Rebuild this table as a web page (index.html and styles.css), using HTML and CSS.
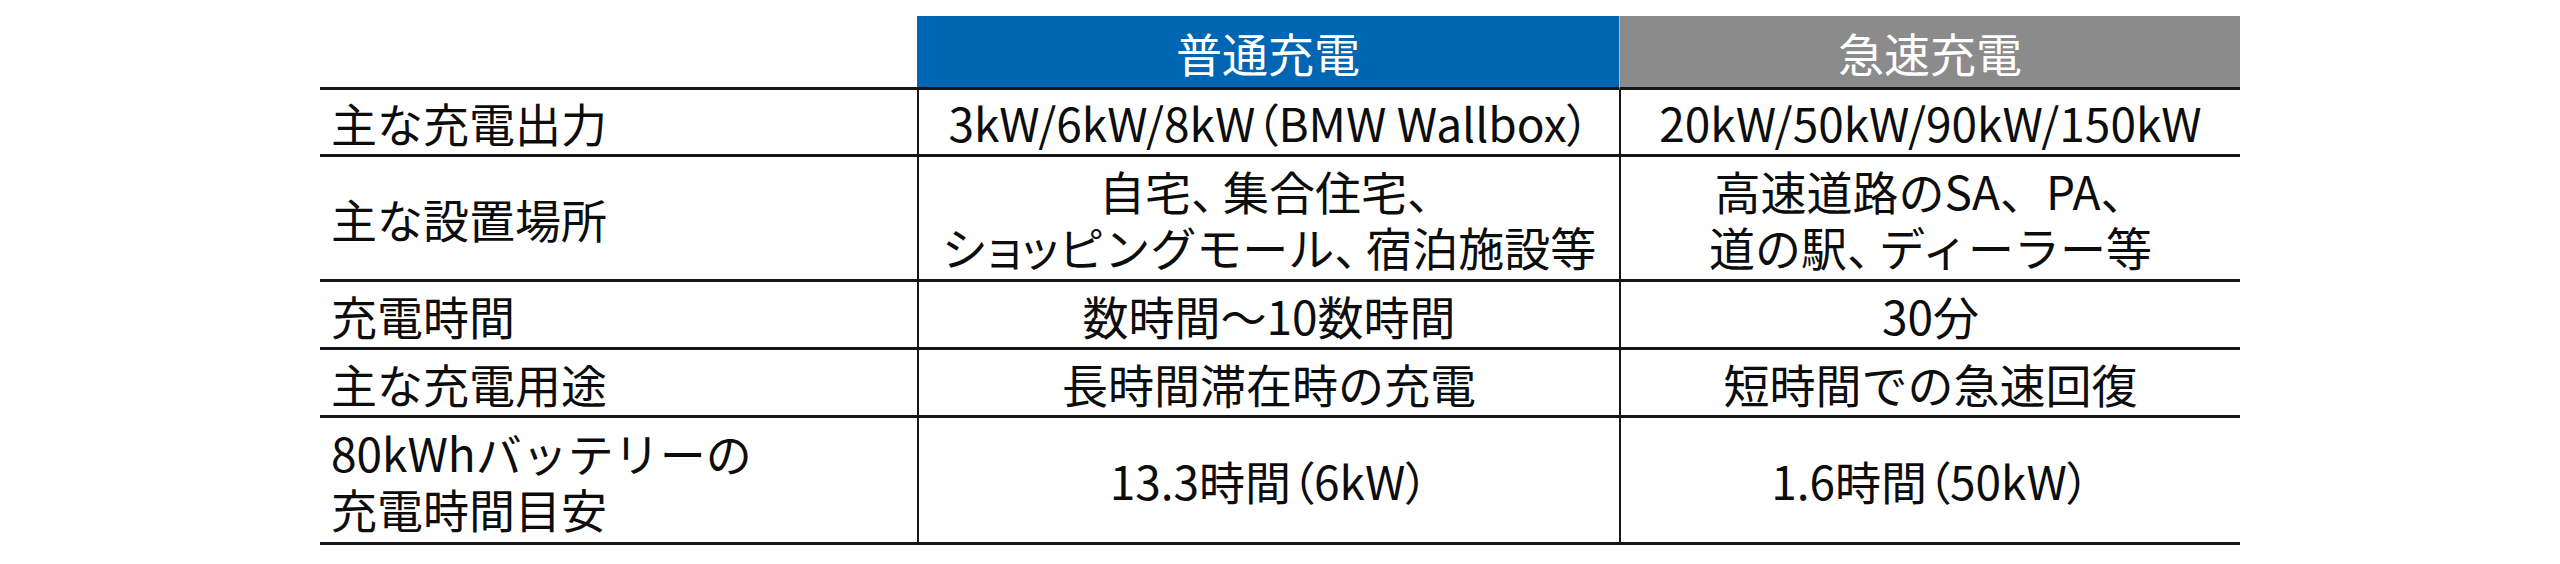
FILE: index.html
```html
<!DOCTYPE html>
<html lang="ja">
<head>
<meta charset="utf-8">
<title>普通充電と急速充電</title>
<link rel="stylesheet" href="styles.css">
</head>
<body>
<div class="table">
  <div class="cell corner"></div>
  <div class="cell head normal"><span class="txt">普通充電</span></div>
  <div class="cell head fast"><span class="txt">急速充電</span></div>

  <div class="cell label"><span class="txt">主な充電出力</span></div>
  <div class="cell val"><span class="txt">3kW/6kW/8kW<span class="pr">（</span>BMW Wallbox<span class="pr">）</span></span></div>
  <div class="cell val"><span class="txt">20kW/50kW/90kW/150kW</span></div>

  <div class="cell label"><span class="txt">主な設置場所</span></div>
  <div class="cell val"><span class="txt">自宅<span class="cm">、</span>集合住宅<span class="cm">、</span><br>シ<span class="pr">ョッ</span>ピングモール<span class="cm">、</span>宿泊施設等</span></div>
  <div class="cell val"><span class="txt">高速道路のSA、PA、<br>道の駅<span class="cm">、</span>ディーラー等</span></div>

  <div class="cell label"><span class="txt">充電時間</span></div>
  <div class="cell val"><span class="txt">数時間～10数時間</span></div>
  <div class="cell val"><span class="txt">30分</span></div>

  <div class="cell label"><span class="txt">主な充電用途</span></div>
  <div class="cell val"><span class="txt">長時間滞在時の充電</span></div>
  <div class="cell val"><span class="txt">短時間での急速回復</span></div>

  <div class="cell label"><span class="txt">80kWhバッテリーの<br>充電時間目安</span></div>
  <div class="cell val"><span class="txt">13.3時間<span class="pr">（</span>6kW<span class="pr">）</span></span></div>
  <div class="cell val"><span class="txt">1.6時間<span class="pr">（</span>50kW<span class="pr">）</span></span></div>
</div>
</body>
</html>
```

FILE: styles.css
```css
html, body {
  margin: 0;
  padding: 0;
  background: #ffffff;
}

body {
  font-family: "Noto Sans CJK JP", "Noto Sans", sans-serif;
  font-size: 46px;
  font-weight: 400;
  color: #0d0d0d;
  padding-top: 16px;
}

.table {
  width: 1920px;
  margin: 0 auto;
  display: grid;
  grid-template-columns: 597px 702px 621px;
  grid-template-rows: 74px 67px 125px 68px 68px 127px;
}

.cell {
  box-sizing: border-box;
  border-bottom: 3px solid #161616;
  display: flex;
  align-items: center;
  line-height: 56px;
  white-space: nowrap;
}

.txt {
  display: block;
}

.label {
  padding-left: 11px;
}

.val {
  justify-content: center;
  text-align: center;
  border-left: 2px solid #161616;
}

.head {
  justify-content: center;
  color: #ffffff;
}

.normal {
  background: #0065b3;
}

.fast {
  background: #8b8b8b;
  border-left: 1px solid #b8b8b8;
}

.pr {
  font-feature-settings: "palt";
}

.cm {
  letter-spacing: -14px;
}
```
